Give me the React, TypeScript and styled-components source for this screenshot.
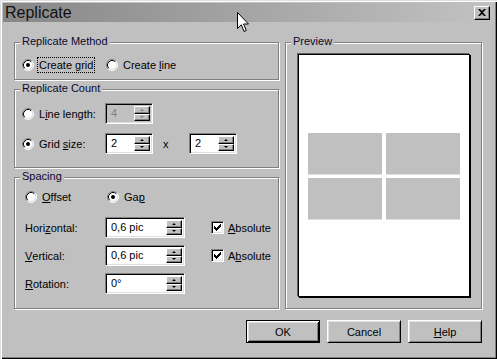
import React from "react";
import styled, { createGlobalStyle, css } from "styled-components";

const GlobalStyle = createGlobalStyle`
  html, body {
    margin: 0;
    padding: 0;
    background: #c0c0c0;
  }
  body {
    font-family: "Liberation Sans", Arial, sans-serif;
    font-size: 11px;
    color: #000;
  }
`;

const Window = styled.div`
  position: relative;
  width: 497px;
  height: 359px;
  box-sizing: border-box;
  padding: 3px;
  background: #c0c0c0;
  box-shadow: inset 1px 1px 0 #dfdfdf, inset 2px 2px 0 #fff,
    inset -1px -1px 0 #000, inset -2px -2px 0 #808080;
  display: flex;
  flex-direction: column;
`;

const TitleBar = styled.div`
  height: 19px;
  display: flex;
  align-items: center;
  justify-content: space-between;
  padding: 0 4px 0 2px;
  background: linear-gradient(to right, #878787, #c2c2c2);
`;

const Title = styled.span`
  font-size: 16px;
  line-height: 19px;
  color: #111;
`;

const CloseButton = styled.div`
  box-sizing: border-box;
  width: 16px;
  height: 14px;
  display: flex;
  align-items: center;
  justify-content: center;
  background: #c0c0c0;
  border: 1px solid;
  border-color: #fff #000 #000 #fff;
  box-shadow: inset -1px -1px 0 #808080;
`;

const Main = styled.div`
  display: flex;
  gap: 6px;
  padding: 20px 0 0 11px;
`;

const LeftColumn = styled.div`
  width: 265px;
  display: flex;
  flex-direction: column;
  gap: 9px;
`;

const Group = styled.div<{ $h: number }>`
  position: relative;
  box-sizing: border-box;
  height: ${(p) => p.$h}px;
  border: 1px solid #808080;
  box-shadow: inset 1px 1px 0 #fff, 1px 1px 0 #fff;
`;

const MethodGroup = styled(Group)`
  display: flex;
  align-items: flex-start;
  padding: 14px 0 0 7px;
`;

const CountGroup = styled(Group)`
  display: flex;
  flex-direction: column;
  gap: 9px;
  padding: 13px 0 0 7px;
`;

const SpacingGroup = styled(Group)`
  display: flex;
  flex-direction: column;
  gap: 7px;
  padding: 11px 0 0 10px;
`;

const PreviewGroup = styled(Group)`
  width: 197px;
  padding: 11px 11px 11px 12px;
  display: flex;
`;

const Legend = styled.span`
  position: absolute;
  top: -8px;
  left: 5px;
  padding: 0 2px;
  line-height: 13px;
  background: #c0c0c0;
  color: #0a0a30;
`;

const OptionRow = styled.div<{ $mb?: number }>`
  display: flex;
  align-items: center;
  height: 16px;
  margin-bottom: ${(p) => p.$mb ?? 0}px;
`;

const Option = styled.label<{ $w?: number }>`
  display: inline-flex;
  align-items: center;
  gap: 4px;
  width: ${(p) => (p.$w ? `${p.$w}px` : "auto")};
  flex-shrink: 0;
`;

const OptionText = styled.span<{ $focus?: boolean }>`
  padding: 0 1px;
  line-height: 14px;
  ${(p) =>
    p.$focus &&
    css`
      outline: 1px dotted #000;
    `}
`;

const FieldRow = styled.div`
  display: flex;
  align-items: center;
  height: 21px;
`;

const FieldLabel = styled.div<{ $w: number }>`
  width: ${(p) => p.$w}px;
  flex-shrink: 0;
  display: flex;
  align-items: center;
`;

const Times = styled.span`
  box-sizing: border-box;
  width: 36px;
  padding-left: 10px;
`;

const SpinField = styled.div<{ $w: number; $disabled?: boolean }>`
  box-sizing: border-box;
  width: ${(p) => p.$w}px;
  height: 21px;
  display: flex;
  padding: 2px;
  border: 1px solid;
  border-color: #808080 #fff #fff #808080;
  box-shadow: inset 1px 1px 0 #000, inset -1px -1px 0 #dfdfdf;
  background: ${(p) => (p.$disabled ? "#c0c0c0" : "#fff")};
`;

const SpinValue = styled.span<{ $disabled?: boolean }>`
  flex: 1;
  padding-left: 3px;
  line-height: 15px;
  color: ${(p) => (p.$disabled ? "#808080" : "#000")};
`;

const SpinButtons = styled.div`
  width: 16px;
  display: flex;
  flex-direction: column;
`;

const SpinButton = styled.div`
  flex: 1;
  box-sizing: border-box;
  display: flex;
  align-items: center;
  justify-content: center;
  background: #c0c0c0;
  border: 1px solid;
  border-color: #fff #000 #000 #fff;
  box-shadow: inset -1px -1px 0 #808080;
`;

const Arrow = styled.span<{ $down?: boolean; $disabled?: boolean }>`
  width: 0;
  height: 0;
  border-left: 2px solid transparent;
  border-right: 2px solid transparent;
  ${(p) =>
    p.$down
      ? css`
          border-top: 2px solid ${p.$disabled ? "#808080" : "#000"};
        `
      : css`
          border-bottom: 2px solid ${p.$disabled ? "#808080" : "#000"};
        `}
`;

const CheckOption = styled.label`
  display: inline-flex;
  align-items: center;
  gap: 4px;
  margin-left: 26px;
`;

const CheckBox = styled.span`
  box-sizing: border-box;
  width: 13px;
  height: 13px;
  display: flex;
  align-items: center;
  justify-content: center;
  background: #fff;
  border: 1px solid;
  border-color: #808080 #fff #fff #808080;
  box-shadow: inset 1px 1px 0 #000, inset -1px -1px 0 #dfdfdf;
`;

const PreviewBox = styled.div`
  flex: 1;
  background: #fff;
  border: 1px solid #000;
  box-shadow: -1px -1px 0 #606060, 1px 1px 0 #000;
  display: flex;
  align-items: center;
  justify-content: center;
`;

const TileGrid = styled.div`
  display: grid;
  grid-template-columns: 74px 74px;
  grid-auto-rows: 41px;
  gap: 4px;
`;

const Tile = styled.div`
  background: #c0c0c0;
  box-shadow: 0 1px 0 #dedede;
`;

const ButtonRow = styled.div`
  display: flex;
  justify-content: flex-end;
  gap: 7px;
  margin-top: 11px;
  padding-right: 12px;
`;

const Button = styled.button<{ $default?: boolean }>`
  box-sizing: border-box;
  width: 74px;
  height: 23px;
  padding: 0;
  font: inherit;
  color: #000;
  background: #c0c0c0;
  border: 1px solid;
  border-color: #fff #000 #000 #fff;
  box-shadow: inset 1px 1px 0 #dfdfdf, inset -1px -1px 0 #808080;
  ${(p) =>
    p.$default &&
    css`
      border-color: #000;
      box-shadow: inset 1px 1px 0 #fff, inset -1px -1px 0 #000,
        inset 2px 2px 0 #dfdfdf, inset -2px -2px 0 #808080;
    `}
`;

const Cursor = styled.svg`
  position: absolute;
  left: 237px;
  top: 12px;
`;

const Radio = ({ checked }: { checked?: boolean }) => (
  <svg width="12" height="12" viewBox="0 0 12 12">
    <circle cx="6" cy="6" r="5" fill="#fff" />
    <path d="M2.11 9.89 A5.5 5.5 0 0 1 9.89 2.11" stroke="#808080" fill="none" />
    <path d="M9.89 2.11 A5.5 5.5 0 0 1 2.11 9.89" stroke="#fff" fill="none" />
    <path d="M2.82 9.18 A4.5 4.5 0 0 1 9.18 2.82" stroke="#000" fill="none" />
    <path d="M9.18 2.82 A4.5 4.5 0 0 1 2.82 9.18" stroke="#dfdfdf" fill="none" />
    {checked && <circle cx="6" cy="6" r="2" fill="#000" />}
  </svg>
);

const Spin = ({ w, value, disabled }: { w: number; value: string; disabled?: boolean }) => (
  <SpinField $w={w} $disabled={disabled}>
    <SpinValue $disabled={disabled}>{value}</SpinValue>
    <SpinButtons>
      <SpinButton>
        <Arrow $disabled={disabled} />
      </SpinButton>
      <SpinButton>
        <Arrow $down $disabled={disabled} />
      </SpinButton>
    </SpinButtons>
  </SpinField>
);

const Check = ({ children }: { children: React.ReactNode }) => (
  <CheckOption>
    <CheckBox>
      <svg width="7" height="7" viewBox="0 0 7 7">
        <path d="M0 2h1v1h1v1h1V3h1V2h1V1h1V0h1v3H6v1H5v1H4v1H3v1H2V6H1V5H0z" fill="#000" />
      </svg>
    </CheckBox>
    <span>{children}</span>
  </CheckOption>
);

export default function App() {
  return (
    <>
      <GlobalStyle />
      <Window>
        <TitleBar>
          <Title>Replicate</Title>
          <CloseButton>
            <svg width="8" height="7" viewBox="0 0 8 7">
              <path d="M0 0h2l2 2 2-2h2L5 3.5 8 7H6L4 5 2 7H0l3-3.5z" fill="#000" />
            </svg>
          </CloseButton>
        </TitleBar>

        <Main>
          <LeftColumn>
            <MethodGroup $h={38}>
              <Legend>Replicate Method</Legend>
              <OptionRow>
                <Option $w={84}>
                  <Radio checked />
                  <OptionText $focus>
                    Create <u>g</u>rid
                  </OptionText>
                </Option>
                <Option>
                  <Radio />
                  <OptionText>
                    Create <u>l</u>ine
                  </OptionText>
                </Option>
              </OptionRow>
            </MethodGroup>

            <CountGroup $h={79}>
              <Legend>Replicate Count</Legend>
              <FieldRow>
                <FieldLabel $w={83}>
                  <Option>
                    <Radio />
                    <OptionText>
                      L<u>i</u>ne length:
                    </OptionText>
                  </Option>
                </FieldLabel>
                <Spin w={48} value="4" disabled />
              </FieldRow>
              <FieldRow>
                <FieldLabel $w={83}>
                  <Option>
                    <Radio checked />
                    <OptionText>
                      Grid <u>s</u>ize:
                    </OptionText>
                  </Option>
                </FieldLabel>
                <Spin w={48} value="2" />
                <Times>x</Times>
                <Spin w={48} value="2" />
              </FieldRow>
            </CountGroup>

            <SpacingGroup $h={132}>
              <Legend>Spacing</Legend>
              <OptionRow $mb={5}>
                <Option $w={82}>
                  <Radio />
                  <OptionText>
                    <u>O</u>ffset
                  </OptionText>
                </Option>
                <Option>
                  <Radio checked />
                  <OptionText>
                    Ga<u>p</u>
                  </OptionText>
                </Option>
              </OptionRow>
              <FieldRow>
                <FieldLabel $w={80}>
                  Hori<u>z</u>ontal:
                </FieldLabel>
                <Spin w={80} value="0,6 pic" />
                <Check>
                  <u>A</u>bsolute
                </Check>
              </FieldRow>
              <FieldRow>
                <FieldLabel $w={80}>
                  <u>V</u>ertical:
                </FieldLabel>
                <Spin w={80} value="0,6 pic" />
                <Check>
                  A<u>b</u>solute
                </Check>
              </FieldRow>
              <FieldRow>
                <FieldLabel $w={80}>
                  <u>R</u>otation:
                </FieldLabel>
                <Spin w={80} value="0°" />
              </FieldRow>
            </SpacingGroup>
          </LeftColumn>

          <PreviewGroup $h={267}>
            <Legend>Preview</Legend>
            <PreviewBox>
              <TileGrid>
                <Tile />
                <Tile />
                <Tile />
                <Tile />
              </TileGrid>
            </PreviewBox>
          </PreviewGroup>
        </Main>

        <ButtonRow>
          <Button $default>OK</Button>
          <Button>Cancel</Button>
          <Button>
            <u>H</u>elp
          </Button>
        </ButtonRow>

        <Cursor width="13" height="22" viewBox="0 0 13 22">
          <path
            d="M0.5 0.5 L0.5 16.5 L4.3 12.8 L7 19.5 L9.3 18.5 L6.6 12 L11.5 12 Z"
            fill="#fff"
            stroke="#000"
            strokeLinejoin="miter"
          />
        </Cursor>
      </Window>
    </>
  );
}
